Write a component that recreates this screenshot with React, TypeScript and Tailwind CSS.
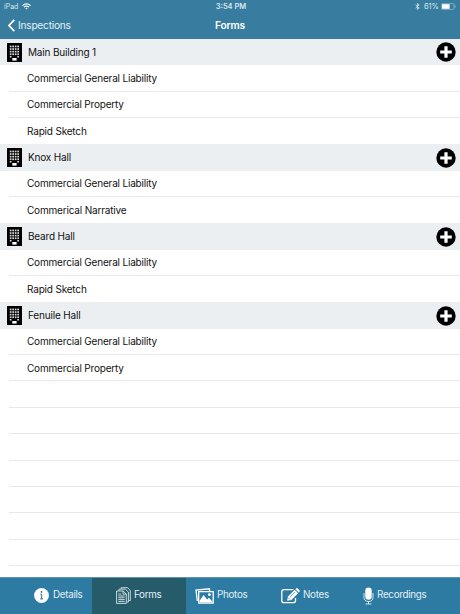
import type { ReactNode } from 'react';

interface Building {
  name: string;
  forms: string[];
}

const buildings: Building[] = [
  { name: 'Main Building 1', forms: ['Commercial General Liability', 'Commercial Property', 'Rapid Sketch'] },
  { name: 'Knox Hall', forms: ['Commercial General Liability', 'Commerical Narrative'] },
  { name: 'Beard Hall', forms: ['Commercial General Liability', 'Rapid Sketch'] },
  { name: 'Fenuile Hall', forms: ['Commercial General Liability', 'Commercial Property'] },
];

const EMPTY_ROWS = 8;

function BuildingIcon() {
  return (
    <svg className="h-[19px] w-[15px] shrink-0" viewBox="0 0 15 19">
      <rect width="15" height="19" fill="#000" />
      {[2.6, 5.2, 7.8, 10.4].map((y) =>
        [2.8, 5.3, 7.8, 10.3].map((x) => (
          <rect key={`${x}-${y}`} x={x} y={y} width="1.7" height="1.7" fill="#d4d6d8" />
        ))
      )}
      <path d="M2.8 13h1.7v1.6H2.8zM10.3 13H12v1.6h-1.7z" fill="#d4d6d8" />
      <path d="M5.3 15h4.3v2.6H5.3z" fill="#fff" />
    </svg>
  );
}

function AddIcon() {
  return (
    <svg className="h-5 w-5" viewBox="0 0 20 20">
      <circle cx="10" cy="10" r="9.7" fill="#000" />
      <path d="M10 4.2v11.6M4.2 10h11.6" stroke="#fff" strokeWidth="3.2" />
    </svg>
  );
}

function InfoIcon() {
  return (
    <svg className="h-[15px] w-[15px]" viewBox="0 0 15 15">
      <circle cx="7.5" cy="7.5" r="7.4" fill="#fff" />
      <path d="M6.3 6.2h1.4v4.6M6.2 10.9h2.8" fill="none" stroke="#2d6f92" strokeWidth="1" />
      <circle cx="7.5" cy="3.9" r="0.9" fill="#2d6f92" />
    </svg>
  );
}

function FormsIcon() {
  return (
    <svg className="h-[17px] w-[15px]" viewBox="0 0 15 17" fill="none" stroke="#d9e8eb" strokeWidth="0.9">
      <path d="M5.2 2V.7h6.2l2.9 2.8v10h-1.5" />
      <path d="M3 3.6V2.2h6.4l3 2.8v10h-1.8" />
      <path d="M.6 4h6.5l3.2 3v9.4H.6z" />
      <path d="M7 4v3.1h3.3M2.3 7h3M2.3 9h6.3M2.3 10.8h6.3M2.3 12.6h6.3M2.3 14.4h6.3" />
    </svg>
  );
}

function PhotosIcon() {
  return (
    <svg className="h-4 w-[19px]" viewBox="0 0 19 16">
      <path d="M2.3 12.8 1 2.1 14.4.8l.3 2.3" fill="none" stroke="#fff" strokeWidth="1.3" />
      <path d="M3.7 3.6h14.5v11.6H3.7z" fill="none" stroke="#fff" strokeWidth="1.3" />
      <path d="m4.6 12.7 4-5.6 3.5 4.3 1.8-1.6 3.5 3.7v1H4.6z" fill="#fff" />
      <circle cx="14.4" cy="6.7" r="1.4" fill="#fff" />
    </svg>
  );
}

function NotesIcon() {
  return (
    <svg className="h-4 w-[19px]" viewBox="0 0 19 16">
      <path
        d="M12.4 1.6H3A2.2 2.2 0 0 0 .8 3.8v8.7A2.2 2.2 0 0 0 3 14.7h9.3a2.2 2.2 0 0 0 2.2-2.2V10"
        fill="none"
        stroke="#fff"
        strokeWidth="1.3"
      />
      <path d="m7 8.5 6.7-6.7 3.4 3.4-6.7 6.7-4.3.9z" fill="#fff" />
      <path d="m14.4 1.2.8-.8c.5-.4 1-.4 1.4 0l1.9 1.9c.4.4.4 1 0 1.4l-.8.8z" fill="#fff" />
      <path d="m9 9 5-5M7.2 9.7l1.7 1.7" stroke="#2d7ba3" strokeWidth="0.7" />
    </svg>
  );
}

function MicIcon() {
  return (
    <svg className="h-[18px] w-[11px]" viewBox="0 0 11 18">
      <rect x="2.3" y="0.4" width="6.4" height="12.4" rx="3.2" fill="#fff" />
      <path
        d="M1 6v4.5c0 2.500 1.700 4 4.500 4s4.500-1.500 4.500-4V6M5.500 14.500v2.400M2.500 17h6"
        fill="none"
        stroke="#fff"
        strokeWidth="0.8"
      />
    </svg>
  );
}

function Tab({ icon, label, className }: { icon: ReactNode; label: string; className: string }) {
  return (
    <div className={`flex h-full items-center pb-px text-[9.8px] tracking-[-0.28px] text-[#e4f0f5] ${className}`}>
      {icon}
      <span>{label}</span>
    </div>
  );
}

export default function App() {
  return (
    <div className="flex h-[614px] w-[460px] flex-col overflow-hidden bg-white font-['Inter',sans-serif] text-[#111]">
      <header className="h-[39px] shrink-0 bg-[#387d9f] text-white">
        <div className="grid h-[13px] grid-cols-3 items-center px-[4px] text-[7px] text-[#d7e7ee]">
          <div className="flex items-center gap-[4px]">
            <span className="pt-px">iPad</span>
            <svg className="h-[7px] w-[9px]" viewBox="0 0 9 7" fill="none" stroke="#fff" strokeWidth="1.2">
              <path d="M.5 2.6a5.7 5.7 0 0 1 8 0M2 4.2a3.5 3.5 0 0 1 5 0" />
              <path d="M3.3 5.2a1.8 1.8 0 0 1 2.4 0L4.5 6.6z" fill="#fff" stroke="none" />
            </svg>
          </div>
          <div className="pl-[2px] text-center text-[7.5px] font-semibold">3:54 PM</div>
          <div className="flex items-center justify-end">
            <svg className="mr-[4px] h-[7px] w-[5px]" viewBox="0 0 5 7" fill="none" stroke="#d7e7ee" strokeWidth="0.8">
              <path d="m.6 2 3.6 3-1.8 1.5v-6L4.2 2 .6 5" />
            </svg>
            <span className="mr-[2px] text-[7.5px]">61%</span>
            <svg className="h-[7px] w-[15px]" viewBox="0 0 15 7">
              <rect x="0.3" y="0.6" width="12.7" height="5.8" rx="1" fill="none" stroke="#a5c8d8" strokeWidth="0.6" />
              <rect x="1" y="1.2" width="7.6" height="4.6" fill="#fff" />
              <path d="M14 2.5v2" stroke="#a5c8d8" strokeWidth="0.8" />
            </svg>
          </div>
        </div>
        <div className="grid h-[26px] grid-cols-3 items-center px-[8px]">
          <div className="flex items-center gap-[3px] text-[10.2px] tracking-[-0.25px] text-[#e4f0f5]">
            <svg className="h-[13px] w-[7px]" viewBox="0 0 7 13" fill="none" stroke="#fff" strokeWidth="1.8">
              <path d="M6.3.8.9 6.5l5.4 5.7" />
            </svg>
            <span>Inspections</span>
          </div>
          <h1 className="text-center text-[10.2px] font-semibold tracking-[-0.2px]">Forms</h1>
        </div>
      </header>

      <main className="min-h-0 flex-1 overflow-hidden tracking-[-0.18px]">
        {buildings.map((building, b) => (
          <section key={building.name}>
            <div className="flex h-[26.35px] items-center bg-[#ebeff2] pr-[4px] pl-[7px]">
              <BuildingIcon />
              <h2 className="ml-[6px] flex-1 text-[10px]">{building.name}</h2>
              <AddIcon />
            </div>
            {building.forms.map((form, i) => (
              <div key={form} className="h-[26.35px] pl-[9px]">
                <div
                  className={`flex h-full items-center border-b pt-px pl-[18px] text-[10px] ${
                    i === building.forms.length - 1 && b < buildings.length - 1 ? 'border-transparent' : 'border-[#e8e8ea]'
                  }`}
                >
                  {form}
                </div>
              </div>
            ))}
          </section>
        ))}
        {Array.from({ length: EMPTY_ROWS }).map((_, i) => (
          <div key={i} className="h-[26.35px] pl-[9px]">
            <div className="h-full border-b border-[#e8e8ea]" />
          </div>
        ))}
      </main>

      <nav className="flex h-[37px] shrink-0 items-center border-t border-[#5f94ad] bg-[#2d7ba3]">
        <Tab icon={<InfoIcon />} label="Details" className="w-[92px] gap-[4px] pl-[34px]" />
        <Tab icon={<FormsIcon />} label="Forms" className="w-[94px] gap-[3px] bg-[#265b69] pl-[24px]" />
        <Tab icon={<PhotosIcon />} label="Photos" className="w-[86px] gap-[3px] pl-[9px]" />
        <Tab icon={<NotesIcon />} label="Notes" className="w-[86px] gap-[3px] pl-[9px]" />
        <Tab icon={<MicIcon />} label="Recordings" className="w-[102px] gap-[3px] pl-[5px]" />
      </nav>
    </div>
  );
}
